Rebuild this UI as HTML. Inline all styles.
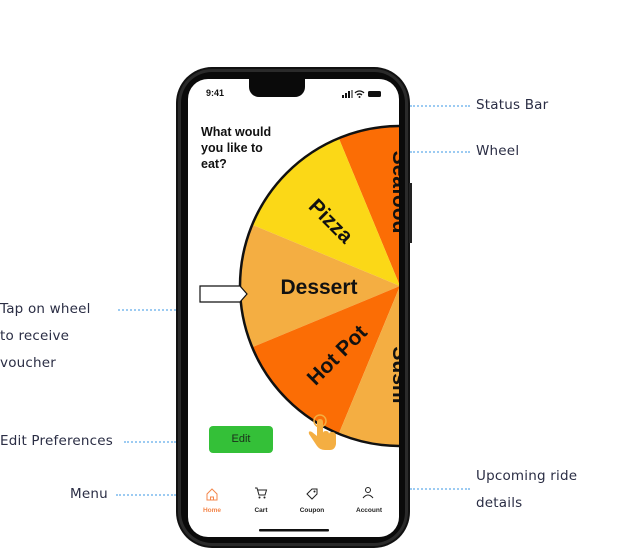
<!DOCTYPE html>
<html><head><meta charset="utf-8"><style>
body{margin:0;width:627px;height:548px;background:#fff;position:relative;overflow:hidden;font-family:"Liberation Sans",sans-serif}
.lbl{position:absolute;color:#2a2d44;line-height:27px;font-family:"DejaVu Sans",sans-serif;font-size:13.5px;letter-spacing:0.2px}
.dot{position:absolute;border-top:2px dotted #9ccbf2;height:0}
.nav{position:absolute;font-size:6.5px;font-weight:bold;color:#222;text-align:center;width:40px}
</style></head><body>
<svg width="627" height="548" style="position:absolute;left:0;top:0">
<defs><clipPath id="scr"><rect x="188" y="79" width="211" height="458" rx="20"/></clipPath></defs>
<rect x="176" y="67" width="234" height="481" rx="36" fill="#111"/>
<rect x="178" y="69" width="230" height="477" rx="34" fill="#2a2a2a"/>
<rect x="181" y="72" width="224" height="471" rx="31" fill="#0a0a0a"/>
<rect x="409" y="183" width="3" height="60" fill="#222"/>
<rect x="188" y="79" width="211" height="458" rx="20" fill="#fff"/>
<g clip-path="url(#scr)">
<path d="M400 286 L461.2 138.2 A160 160 0 0 0 338.8 138.2Z" fill="#fb6d05"/>
<path d="M400 286 L338.8 138.2 A160 160 0 0 0 252.2 224.8Z" fill="#fbd817"/>
<path d="M400 286 L252.2 224.8 A160 160 0 0 0 252.2 347.2Z" fill="#f4ae42"/>
<path d="M400 286 L252.2 347.2 A160 160 0 0 0 338.8 433.8Z" fill="#fb6d05"/>
<path d="M400 286 L338.8 433.8 A160 160 0 0 0 461.2 433.8Z" fill="#f4ae42"/>
<circle cx="400" cy="286" r="160" fill="none" stroke="#111" stroke-width="2.5"/>
<text x="319" y="294" font-size="21" font-weight="bold" text-anchor="middle" fill="#111">Dessert</text>
<text transform="translate(331,221) rotate(45)" font-size="21" font-weight="bold" text-anchor="middle" fill="#111" y="7">Pizza</text>
<text transform="translate(337,355) rotate(-45)" font-size="21" font-weight="bold" text-anchor="middle" fill="#111" y="7">Hot Pot</text>
<text transform="translate(400,192) rotate(90)" font-size="21" font-weight="bold" text-anchor="middle" fill="#111" y="7">Seafood</text>
<text transform="translate(400,375) rotate(90)" font-size="21" font-weight="bold" text-anchor="middle" fill="#111" y="7">Sushi</text>
</g>
<path d="M249 79 h56 v8 a10 10 0 0 1 -10 10 h-36 a10 10 0 0 1 -10 -10z" fill="#0a0a0a"/>
<path d="M200 286 h40 l7 8 l-7 8 h-40z" fill="#fff" stroke="#111" stroke-width="1.2"/>
<rect x="259" y="529" width="70" height="2.5" rx="1" fill="#111"/>
<rect x="342" y="95" width="2" height="3" fill="#111"/><rect x="345" y="93" width="2" height="5" fill="#111"/><rect x="348" y="91" width="2" height="7" fill="#111"/><rect x="351" y="90" width="2" height="8" fill="#111" opacity=".5"/>
<path d="M355 93 a6 6 0 0 1 9 0 M357 95 a3.5 3.5 0 0 1 5 0" stroke="#111" stroke-width="1.3" fill="none"/><circle cx="359.5" cy="97" r="1" fill="#111"/>
<rect x="368" y="91" width="13" height="6" rx="1.5" fill="#111"/>
<circle cx="320" cy="421" r="6" fill="none" stroke="#f4ae42" stroke-width="1.5"/>
<path d="M317 422 v14 l-5 -4 q-4 -2 -3 2 l8 12 q3 4 8 4 h5 q5 0 6 -6 v-8 q0 -4 -4 -4 q-3 0 -3 2 q0 -3 -3 -3 q-3 0 -3 2 v-11 q0 -3 -3 -3 q-3 0 -3 3z" fill="#f4ae42"/>
<path d="M207 494 l5 -5 l5 5 v6 h-10z M210.5 500 v-3 h3 v3" fill="none" stroke="#f4874c" stroke-width="1"/>
<path d="M255 488 h2 l2 7 h6 l1.5 -5 h-9" fill="none" stroke="#222" stroke-width="1"/><circle cx="259.5" cy="497.5" r="1" fill="#222"/><circle cx="264.5" cy="497.5" r="1" fill="#222"/>
<path d="M307 494 l5 -5 h5 v5 l-5 5z" fill="none" stroke="#222" stroke-width="1"/><circle cx="314.5" cy="491.5" r="1" fill="#222"/>
<circle cx="368" cy="490" r="2.5" fill="none" stroke="#222" stroke-width="1"/><path d="M363 498 q5 -6 10 0" fill="none" stroke="#222" stroke-width="1"/>
</svg>
<div style="position:absolute;left:206px;top:88px;font-size:9px;font-weight:bold;color:#111">9:41</div>
<div style="position:absolute;left:201px;top:124px;font-size:12.5px;font-weight:bold;color:#111;line-height:16px">What would<br>you like to<br>eat?</div>
<div style="position:absolute;left:209px;top:426px;width:64px;height:27px;background:#34c038;border-radius:4px;color:#1a2e1a;font-size:11px;text-align:center;line-height:27px">Edit</div>
<div class="nav" style="left:192px;top:507px;color:#f4874c">Home</div>
<div class="nav" style="left:241px;top:507px">Cart</div>
<div class="nav" style="left:292px;top:507px">Coupon</div>
<div class="nav" style="left:349px;top:507px">Account</div>
<div class="dot" style="left:410px;top:105px;width:60px"></div><div class="lbl" style="left:476px;top:92px">Status Bar</div>
<div class="dot" style="left:410px;top:151px;width:60px"></div><div class="lbl" style="left:476px;top:138px">Wheel</div>
<div class="dot" style="left:410px;top:488px;width:60px"></div><div class="lbl" style="left:476px;top:463px">Upcoming ride<br>details</div>
<div class="lbl" style="left:0;top:296px">Tap on wheel<br>to receive<br>voucher</div><div class="dot" style="left:118px;top:309px;width:58px"></div>
<div class="lbl" style="left:0;top:428px">Edit Preferences</div><div class="dot" style="left:124px;top:441px;width:52px"></div>
<div class="lbl" style="left:70px;top:481px">Menu</div><div class="dot" style="left:116px;top:494px;width:60px"></div>
</body></html>
